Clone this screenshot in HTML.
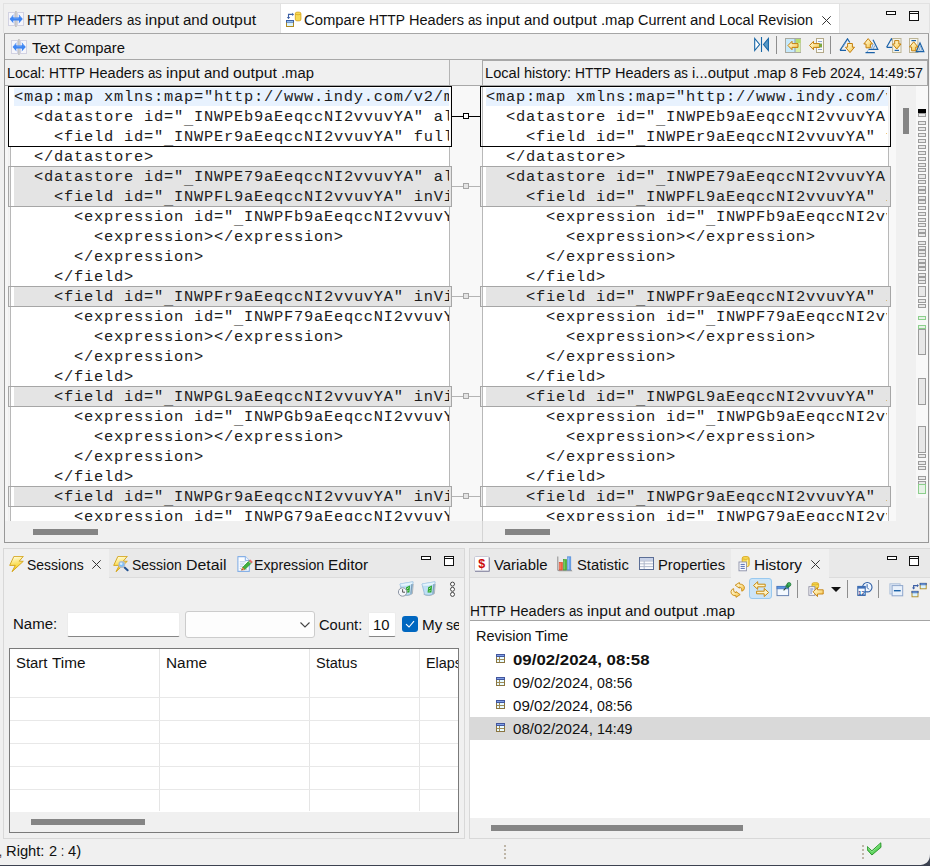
<!DOCTYPE html>
<html><head><meta charset="utf-8"><title>Compare</title>
<style>
html,body{margin:0;padding:0;}
body{width:930px;height:866px;overflow:hidden;background:#f0f0f0;position:relative;font-family:"Liberation Sans",sans-serif;color:#111;}
.a{position:absolute;box-sizing:border-box;}
.t{white-space:pre;}
.w{position:absolute;top:0;transform-origin:0 0;}
.code{position:absolute;overflow:hidden;font-family:"Liberation Mono",monospace;font-size:15.4px;letter-spacing:0.76px;line-height:20px;white-space:pre;color:#1c1c1c;}
.code div{height:20px;}
.code i{font-style:normal;position:relative;top:2.6px;}
</style></head><body>
<svg width="0" height="0" style="position:absolute"><defs><linearGradient id="ga" x1="0" y1="0" x2="0.9" y2="1"><stop offset="0" stop-color="#fffbe8"/><stop offset="0.45" stop-color="#fde9a6"/><stop offset="1" stop-color="#f5c043"/></linearGradient><linearGradient id="gb" x1="0.3" y1="0" x2="0.5" y2="1"><stop offset="0" stop-color="#fffde0"/><stop offset="0.5" stop-color="#fbe060"/><stop offset="1" stop-color="#f8c400"/></linearGradient></defs></svg>
<div class="a" style="left:3px;top:3px;width:927px;height:1px;background:#e2e2e2;"></div>
<div class="a" style="left:3px;top:3px;width:1px;height:30px;background:#e2e2e2;"></div>
<div class="a" style="left:4px;top:33px;width:1px;height:510px;background:#989898;"></div>
<div class="a" style="left:928px;top:33px;width:1px;height:510px;background:#989898;"></div>
<div class="a" style="left:929px;top:3px;width:1px;height:30px;background:#e2e2e2;"></div>
<div class="a" style="left:4px;top:542px;width:925px;height:1px;background:#989898;"></div>
<div class="a" style="left:281px;top:4px;width:559px;height:29px;background:#ffffff;"></div>
<div class="a" style="left:4px;top:33px;width:925px;height:1px;background:#a6a6a6;"></div>
<div class="a" style="left:280px;top:4px;width:1px;height:29px;background:#e2e2e2;"></div>
<div class="a" style="left:839px;top:4px;width:1px;height:29px;background:#e2e2e2;"></div>
<div class="a t" style="left:27.20px;top:9.70px;font-size:15.3px;line-height:20px;"><span class="w" style="left:0.00px;transform:scaleX(0.9052);">HTTP</span> <span class="w" style="left:40.18px;transform:scaleX(0.9553);">Headers</span> <span class="w" style="left:99.43px;transform:scaleX(0.8702);">as</span> <span class="w" style="left:117.51px;transform:scaleX(1.0294);">input</span> <span class="w" style="left:155.68px;transform:scaleX(0.9837);">and</span> <span class="w" style="left:184.81px;transform:scaleX(1.0390);">output</span></div>
<div class="a t" style="left:304.20px;top:9.70px;font-size:15.3px;line-height:20px;"><span class="w" style="left:0.00px;transform:scaleX(0.9685);">Compare</span> <span class="w" style="left:64.94px;transform:scaleX(0.9004);">HTTP</span> <span class="w" style="left:104.90px;transform:scaleX(0.9502);">Headers</span> <span class="w" style="left:163.84px;transform:scaleX(0.8656);">as</span> <span class="w" style="left:181.82px;transform:scaleX(1.0239);">input</span> <span class="w" style="left:219.78px;transform:scaleX(0.9785);">and</span> <span class="w" style="left:248.76px;transform:scaleX(1.0335);">output</span> <span class="w" style="left:296.71px;transform:scaleX(0.9693);">.map</span> <span class="w" style="left:333.67px;transform:scaleX(0.9400);">Current</span> <span class="w" style="left:385.62px;transform:scaleX(0.9785);">and</span> <span class="w" style="left:414.59px;transform:scaleX(0.9560);">Local</span> <span class="w" style="left:453.55px;transform:scaleX(0.9365);">Revision</span></div>
<svg class="a" style="left:822px;top:16px;" width="9" height="9" viewBox="0 0 9 9"><path d="M0.3 0.3 L8.7 8.7 M8.7 0.3 L0.3 8.7" stroke="#333" stroke-width="1" fill="none"/></svg>
<div class="a" style="left:886px;top:11px;width:10px;height:4px;background:#ffffff;border:1px solid #111;"></div>
<div class="a" style="left:909px;top:11px;width:10px;height:10px;background:#ffffff;border:1px solid #111;"></div>
<div class="a" style="left:909px;top:13px;width:10px;height:1px;background:#111;"></div>
<div class="a t" style="left:31.70px;top:37.70px;font-size:15.3px;line-height:20px;"><span class="w" style="left:0.00px;transform:scaleX(0.9979);">Text</span> <span class="w" style="left:32.00px;transform:scaleX(0.9695);">Compare</span></div>
<div class="a" style="left:5px;top:59px;width:923px;height:1px;background:#a8a8a8;"></div>
<div class="a t" style="left:7.20px;top:63.40px;font-size:15.3px;line-height:20px;"><span class="w" style="left:0.00px;transform:scaleX(0.9293);">Local:</span> <span class="w" style="left:41.93px;transform:scaleX(0.8998);">HTTP</span> <span class="w" style="left:81.87px;transform:scaleX(0.9496);">Headers</span> <span class="w" style="left:140.77px;transform:scaleX(0.8650);">as</span> <span class="w" style="left:158.74px;transform:scaleX(1.0232);">input</span> <span class="w" style="left:196.68px;transform:scaleX(0.9778);">and</span> <span class="w" style="left:225.63px;transform:scaleX(1.0328);">output</span> <span class="w" style="left:273.55px;transform:scaleX(0.9687);">.map</span></div>
<div class="a" style="left:449px;top:60px;width:1px;height:26px;background:#b4b4b4;"></div>
<div class="a" style="left:482px;top:60px;width:1px;height:482px;background:#b4b4b4;"></div>
<div class="a" style="left:482px;top:60px;width:446px;height:26px;border:1px solid #a8a8a8;"></div>
<div class="a t" style="left:485.20px;top:63.40px;font-size:15.3px;line-height:20px;"><span class="w" style="left:0.00px;transform:scaleX(0.9570);">Local</span> <span class="w" style="left:39.00px;transform:scaleX(0.9531);">history:</span> <span class="w" style="left:90.00px;transform:scaleX(0.9012);">HTTP</span> <span class="w" style="left:130.00px;transform:scaleX(0.9511);">Headers</span> <span class="w" style="left:189.00px;transform:scaleX(0.8664);">as</span> <span class="w" style="left:207.00px;transform:scaleX(0.9713);">i...output</span> <span class="w" style="left:268.00px;transform:scaleX(0.9703);">.map</span> <span class="w" style="left:305.00px;transform:scaleX(0.9403);">8</span> <span class="w" style="left:317.00px;transform:scaleX(0.9104);">Feb</span> <span class="w" style="left:345.00px;transform:scaleX(0.9142);">2024,</span> <span class="w" style="left:384.00px;transform:scaleX(0.9068);">14:49:57</span></div>
<div class="a" style="left:5px;top:85px;width:923px;height:1px;background:#a8a8a8;"></div>
<div class="a" style="left:9px;top:86px;width:442px;height:435px;background:#ffffff;"></div>
<div class="a" style="left:10px;top:147px;width:1px;height:374px;background:#b8b8b8;"></div>
<div class="a" style="left:449px;top:147px;width:1px;height:374px;background:#b8b8b8;"></div>
<div class="a" style="left:450px;top:86px;width:32px;height:435px;background:#f8f8f8;"></div>
<div class="a" style="left:452px;top:86px;width:28px;height:435px;background:#f8f8f8;"></div>
<div class="a" style="left:483px;top:86px;width:405px;height:435px;background:#ffffff;"></div>
<div class="a" style="left:482px;top:86px;width:1px;height:435px;background:#b8b8b8;"></div>
<div class="a" style="left:888px;top:147px;width:1px;height:374px;background:#b8b8b8;"></div>
<div class="a" style="left:889px;top:86px;width:7px;height:435px;background:#f8f8f8;"></div>
<div class="a" style="left:9px;top:147px;width:1px;height:374px;background:#f4f4f4;"></div>
<div class="a" style="left:5px;top:86px;width:3px;height:435px;background:#f6f6f6;"></div>
<div class="a" style="left:14px;top:88px;width:435px;height:18px;background:#e8f2fe;"></div>
<div class="a" style="left:486px;top:88px;width:402px;height:18px;background:#e8f2fe;"></div>
<div class="a" style="left:14px;top:167px;width:437px;height:40px;background:#e4e4e4;"></div>
<div class="a" style="left:486px;top:167px;width:404px;height:40px;background:#e4e4e4;"></div>
<div class="a" style="left:14px;top:287px;width:437px;height:20px;background:#e4e4e4;"></div>
<div class="a" style="left:486px;top:287px;width:404px;height:20px;background:#e4e4e4;"></div>
<div class="a" style="left:14px;top:387px;width:437px;height:20px;background:#e4e4e4;"></div>
<div class="a" style="left:486px;top:387px;width:404px;height:20px;background:#e4e4e4;"></div>
<div class="a" style="left:14px;top:487px;width:437px;height:20px;background:#e4e4e4;"></div>
<div class="a" style="left:486px;top:487px;width:404px;height:20px;background:#e4e4e4;"></div>
<div class="code" style="left:14px;top:87px;width:435px;height:434px;"><div>&lt;map:map xmlns:map=&quot;http://www.indy.com/v2/map&quot; version=&quot;2.0&quot;&gt;</div><div>  &lt;datastore id=&quot;<i>_</i>INWPEb9aEeqccNI2vvuvYA&quot; alias=&quot;input&quot;&gt;</div><div>    &lt;field id=&quot;<i>_</i>INWPEr9aEeqccNI2vvuvYA&quot; fullName=&quot;headers&quot;/&gt;</div><div>  &lt;/datastore&gt;</div><div>  &lt;datastore id=&quot;<i>_</i>INWPE79aEeqccNI2vvuvYA&quot; alias=&quot;output&quot;&gt;</div><div>    &lt;field id=&quot;<i>_</i>INWPFL9aEeqccNI2vvuvYA&quot; inView=&quot;true&quot;&gt;</div><div>      &lt;expression id=&quot;<i>_</i>INWPFb9aEeqccNI2vvuvYA&quot;&gt;</div><div>        &lt;expression&gt;&lt;/expression&gt;</div><div>      &lt;/expression&gt;</div><div>    &lt;/field&gt;</div><div>    &lt;field id=&quot;<i>_</i>INWPFr9aEeqccNI2vvuvYA&quot; inView=&quot;true&quot;&gt;</div><div>      &lt;expression id=&quot;<i>_</i>INWPF79aEeqccNI2vvuvYA&quot;&gt;</div><div>        &lt;expression&gt;&lt;/expression&gt;</div><div>      &lt;/expression&gt;</div><div>    &lt;/field&gt;</div><div>    &lt;field id=&quot;<i>_</i>INWPGL9aEeqccNI2vvuvYA&quot; inView=&quot;true&quot;&gt;</div><div>      &lt;expression id=&quot;<i>_</i>INWPGb9aEeqccNI2vvuvYA&quot;&gt;</div><div>        &lt;expression&gt;&lt;/expression&gt;</div><div>      &lt;/expression&gt;</div><div>    &lt;/field&gt;</div><div>    &lt;field id=&quot;<i>_</i>INWPGr9aEeqccNI2vvuvYA&quot; inView=&quot;true&quot;&gt;</div><div>      &lt;expression id=&quot;<i>_</i>INWPG79aEeqccNI2vvuvYA&quot;&gt;</div></div>
<div class="code" style="left:486px;top:87px;width:401px;height:434px;"><div>&lt;map:map xmlns:map=&quot;http://www.indy.com/v2/map&quot; version=&quot;2.0&quot;&gt;</div><div>  &lt;datastore id=&quot;<i>_</i>INWPEb9aEeqccNI2vvuvYA&quot; alias=&quot;input&quot;&gt;</div><div>    &lt;field id=&quot;<i>_</i>INWPEr9aEeqccNI2vvuvYA&quot; fullName=&quot;headers&quot;/&gt;</div><div>  &lt;/datastore&gt;</div><div>  &lt;datastore id=&quot;<i>_</i>INWPE79aEeqccNI2vvuvYA&quot; alias=&quot;output&quot;&gt;</div><div>    &lt;field id=&quot;<i>_</i>INWPFL9aEeqccNI2vvuvYA&quot; inView=&quot;true&quot;&gt;</div><div>      &lt;expression id=&quot;<i>_</i>INWPFb9aEeqccNI2vvuvYA&quot;&gt;</div><div>        &lt;expression&gt;&lt;/expression&gt;</div><div>      &lt;/expression&gt;</div><div>    &lt;/field&gt;</div><div>    &lt;field id=&quot;<i>_</i>INWPFr9aEeqccNI2vvuvYA&quot; inView=&quot;true&quot;&gt;</div><div>      &lt;expression id=&quot;<i>_</i>INWPF79aEeqccNI2vvuvYA&quot;&gt;</div><div>        &lt;expression&gt;&lt;/expression&gt;</div><div>      &lt;/expression&gt;</div><div>    &lt;/field&gt;</div><div>    &lt;field id=&quot;<i>_</i>INWPGL9aEeqccNI2vvuvYA&quot; inView=&quot;true&quot;&gt;</div><div>      &lt;expression id=&quot;<i>_</i>INWPGb9aEeqccNI2vvuvYA&quot;&gt;</div><div>        &lt;expression&gt;&lt;/expression&gt;</div><div>      &lt;/expression&gt;</div><div>    &lt;/field&gt;</div><div>    &lt;field id=&quot;<i>_</i>INWPGr9aEeqccNI2vvuvYA&quot; inView=&quot;true&quot;&gt;</div><div>      &lt;expression id=&quot;<i>_</i>INWPG79aEeqccNI2vvuvYA&quot;&gt;</div></div>
<div class="a" style="left:8px;top:166px;width:444px;height:1px;background:#a6a6a6;"></div>
<div class="a" style="left:8px;top:206px;width:444px;height:1px;background:#a6a6a6;"></div>
<div class="a" style="left:8px;top:166px;width:1px;height:41px;background:#a6a6a6;"></div>
<div class="a" style="left:451px;top:166px;width:1px;height:41px;background:#a6a6a6;"></div>
<div class="a" style="left:9px;top:167px;width:1px;height:39px;background:#ececec;"></div>
<div class="a" style="left:480px;top:166px;width:411px;height:1px;background:#a6a6a6;"></div>
<div class="a" style="left:480px;top:206px;width:411px;height:1px;background:#a6a6a6;"></div>
<div class="a" style="left:890px;top:166px;width:1px;height:41px;background:#a6a6a6;"></div>
<div class="a" style="left:480px;top:166px;width:1px;height:41px;background:#a6a6a6;"></div>
<div class="a" style="left:481px;top:167px;width:1px;height:39px;background:#ececec;"></div>
<div class="a" style="left:452px;top:186px;width:28px;height:1px;background:#b4b4b4;"></div>
<div class="a" style="left:463px;top:183px;width:6px;height:6px;background:#e4e4e4;border:1px solid #a6a6a6;"></div>
<div class="a" style="left:8px;top:286px;width:444px;height:1px;background:#a6a6a6;"></div>
<div class="a" style="left:8px;top:306px;width:444px;height:1px;background:#a6a6a6;"></div>
<div class="a" style="left:8px;top:286px;width:1px;height:21px;background:#a6a6a6;"></div>
<div class="a" style="left:451px;top:286px;width:1px;height:21px;background:#a6a6a6;"></div>
<div class="a" style="left:9px;top:287px;width:1px;height:19px;background:#ececec;"></div>
<div class="a" style="left:480px;top:286px;width:411px;height:1px;background:#a6a6a6;"></div>
<div class="a" style="left:480px;top:306px;width:411px;height:1px;background:#a6a6a6;"></div>
<div class="a" style="left:890px;top:286px;width:1px;height:21px;background:#a6a6a6;"></div>
<div class="a" style="left:480px;top:286px;width:1px;height:21px;background:#a6a6a6;"></div>
<div class="a" style="left:481px;top:287px;width:1px;height:19px;background:#ececec;"></div>
<div class="a" style="left:452px;top:296px;width:28px;height:1px;background:#b4b4b4;"></div>
<div class="a" style="left:463px;top:293px;width:6px;height:6px;background:#e4e4e4;border:1px solid #a6a6a6;"></div>
<div class="a" style="left:8px;top:386px;width:444px;height:1px;background:#a6a6a6;"></div>
<div class="a" style="left:8px;top:406px;width:444px;height:1px;background:#a6a6a6;"></div>
<div class="a" style="left:8px;top:386px;width:1px;height:21px;background:#a6a6a6;"></div>
<div class="a" style="left:451px;top:386px;width:1px;height:21px;background:#a6a6a6;"></div>
<div class="a" style="left:9px;top:387px;width:1px;height:19px;background:#ececec;"></div>
<div class="a" style="left:480px;top:386px;width:411px;height:1px;background:#a6a6a6;"></div>
<div class="a" style="left:480px;top:406px;width:411px;height:1px;background:#a6a6a6;"></div>
<div class="a" style="left:890px;top:386px;width:1px;height:21px;background:#a6a6a6;"></div>
<div class="a" style="left:480px;top:386px;width:1px;height:21px;background:#a6a6a6;"></div>
<div class="a" style="left:481px;top:387px;width:1px;height:19px;background:#ececec;"></div>
<div class="a" style="left:452px;top:396px;width:28px;height:1px;background:#b4b4b4;"></div>
<div class="a" style="left:463px;top:393px;width:6px;height:6px;background:#e4e4e4;border:1px solid #a6a6a6;"></div>
<div class="a" style="left:8px;top:486px;width:444px;height:1px;background:#a6a6a6;"></div>
<div class="a" style="left:8px;top:506px;width:444px;height:1px;background:#a6a6a6;"></div>
<div class="a" style="left:8px;top:486px;width:1px;height:21px;background:#a6a6a6;"></div>
<div class="a" style="left:451px;top:486px;width:1px;height:21px;background:#a6a6a6;"></div>
<div class="a" style="left:9px;top:487px;width:1px;height:19px;background:#ececec;"></div>
<div class="a" style="left:480px;top:486px;width:411px;height:1px;background:#a6a6a6;"></div>
<div class="a" style="left:480px;top:506px;width:411px;height:1px;background:#a6a6a6;"></div>
<div class="a" style="left:890px;top:486px;width:1px;height:21px;background:#a6a6a6;"></div>
<div class="a" style="left:480px;top:486px;width:1px;height:21px;background:#a6a6a6;"></div>
<div class="a" style="left:481px;top:487px;width:1px;height:19px;background:#ececec;"></div>
<div class="a" style="left:452px;top:496px;width:28px;height:1px;background:#b4b4b4;"></div>
<div class="a" style="left:463px;top:493px;width:6px;height:6px;background:#e4e4e4;border:1px solid #a6a6a6;"></div>
<div class="a" style="left:8px;top:86px;width:444px;height:1px;background:#000000;"></div>
<div class="a" style="left:8px;top:86px;width:1px;height:61px;background:#000000;"></div>
<div class="a" style="left:8px;top:146px;width:444px;height:1px;background:#000000;"></div>
<div class="a" style="left:451px;top:86px;width:1px;height:61px;background:#000000;"></div>
<div class="a" style="left:480px;top:86px;width:411px;height:1px;background:#000000;"></div>
<div class="a" style="left:480px;top:146px;width:411px;height:1px;background:#000000;"></div>
<div class="a" style="left:480px;top:86px;width:1px;height:61px;background:#000000;"></div>
<div class="a" style="left:890px;top:86px;width:1px;height:61px;background:#000000;"></div>
<div class="a" style="left:452px;top:116px;width:28px;height:1px;background:#000000;"></div>
<div class="a" style="left:463px;top:113px;width:6px;height:6px;background:#ffffff;border:1px solid #000;"></div>
<div class="a" style="left:5px;top:521px;width:923px;height:21px;background:#f0f0f0;"></div>
<div class="a" style="left:482px;top:521px;width:1px;height:21px;background:#d4d4d4;"></div>
<div class="a" style="left:33px;top:529px;width:65px;height:6px;background:#858585;"></div>
<div class="a" style="left:505px;top:529px;width:45px;height:6px;background:#858585;"></div>
<div class="a" style="left:903px;top:108px;width:6px;height:26px;background:#858585;"></div>
<div class="a" style="left:916px;top:86px;width:12px;height:412px;background:#f8f8f8;"></div>
<div class="a" style="left:918px;top:109px;width:8px;height:4px;background:#000;"></div>
<div class="a" style="left:918px;top:113px;width:8px;height:4px;background:#e8e8e8;border:1px solid #9c9c9c;"></div>
<div class="a" style="left:918px;top:121px;width:8px;height:4px;background:#e8e8e8;border:1px solid #9c9c9c;"></div>
<div class="a" style="left:918px;top:127px;width:8px;height:4px;background:#e8e8e8;border:1px solid #9c9c9c;"></div>
<div class="a" style="left:918px;top:133px;width:8px;height:4px;background:#e8e8e8;border:1px solid #9c9c9c;"></div>
<div class="a" style="left:918px;top:139px;width:8px;height:4px;background:#e8e8e8;border:1px solid #9c9c9c;"></div>
<div class="a" style="left:918px;top:145px;width:8px;height:4px;background:#e8e8e8;border:1px solid #9c9c9c;"></div>
<div class="a" style="left:918px;top:151px;width:8px;height:4px;background:#e8e8e8;border:1px solid #9c9c9c;"></div>
<div class="a" style="left:918px;top:157px;width:8px;height:4px;background:#e8e8e8;border:1px solid #9c9c9c;"></div>
<div class="a" style="left:918px;top:163px;width:8px;height:4px;background:#e8e8e8;border:1px solid #9c9c9c;"></div>
<div class="a" style="left:918px;top:168px;width:8px;height:4px;background:#e8e8e8;border:1px solid #9c9c9c;"></div>
<div class="a" style="left:918px;top:174px;width:8px;height:5px;background:#e8e8e8;border:1px solid #9c9c9c;"></div>
<div class="a" style="left:918px;top:180px;width:8px;height:4px;background:#e8e8e8;border:1px solid #9c9c9c;"></div>
<div class="a" style="left:918px;top:186px;width:8px;height:8px;background:#e8e8e8;border:1px solid #9c9c9c;"></div>
<div class="a" style="left:918px;top:189px;width:8px;height:1px;background:#9c9c9c;"></div>
<div class="a" style="left:918px;top:190px;width:8px;height:1px;background:#9c9c9c;"></div>
<div class="a" style="left:918px;top:196px;width:8px;height:8px;background:#e8e8e8;border:1px solid #9c9c9c;"></div>
<div class="a" style="left:918px;top:199px;width:8px;height:1px;background:#9c9c9c;"></div>
<div class="a" style="left:918px;top:200px;width:8px;height:1px;background:#9c9c9c;"></div>
<div class="a" style="left:918px;top:206px;width:8px;height:4px;background:#e8e8e8;border:1px solid #9c9c9c;"></div>
<div class="a" style="left:918px;top:212px;width:8px;height:4px;background:#e8e8e8;border:1px solid #9c9c9c;"></div>
<div class="a" style="left:918px;top:218px;width:8px;height:4px;background:#e8e8e8;border:1px solid #9c9c9c;"></div>
<div class="a" style="left:918px;top:223px;width:8px;height:4px;background:#e8e8e8;border:1px solid #9c9c9c;"></div>
<div class="a" style="left:918px;top:229px;width:8px;height:8px;background:#e8e8e8;border:1px solid #9c9c9c;"></div>
<div class="a" style="left:918px;top:232px;width:8px;height:1px;background:#9c9c9c;"></div>
<div class="a" style="left:918px;top:233px;width:8px;height:1px;background:#9c9c9c;"></div>
<div class="a" style="left:918px;top:241px;width:8px;height:4px;background:#e8e8e8;border:1px solid #9c9c9c;"></div>
<div class="a" style="left:918px;top:246px;width:8px;height:11px;background:#e8e8e8;border:1px solid #9c9c9c;"></div>
<div class="a" style="left:918px;top:249px;width:8px;height:1px;background:#9c9c9c;"></div>
<div class="a" style="left:918px;top:250px;width:8px;height:1px;background:#9c9c9c;"></div>
<div class="a" style="left:918px;top:253px;width:8px;height:1px;background:#9c9c9c;"></div>
<div class="a" style="left:918px;top:259px;width:8px;height:12px;background:#e8e8e8;border:1px solid #9c9c9c;"></div>
<div class="a" style="left:918px;top:262px;width:8px;height:1px;background:#9c9c9c;"></div>
<div class="a" style="left:918px;top:263px;width:8px;height:1px;background:#9c9c9c;"></div>
<div class="a" style="left:918px;top:266px;width:8px;height:1px;background:#9c9c9c;"></div>
<div class="a" style="left:918px;top:267px;width:8px;height:1px;background:#9c9c9c;"></div>
<div class="a" style="left:918px;top:273px;width:8px;height:11px;background:#e8e8e8;border:1px solid #9c9c9c;"></div>
<div class="a" style="left:918px;top:276px;width:8px;height:1px;background:#9c9c9c;"></div>
<div class="a" style="left:918px;top:277px;width:8px;height:1px;background:#9c9c9c;"></div>
<div class="a" style="left:918px;top:280px;width:8px;height:1px;background:#9c9c9c;"></div>
<div class="a" style="left:918px;top:286px;width:8px;height:11px;background:#e8e8e8;border:1px solid #9c9c9c;"></div>
<div class="a" style="left:918px;top:299px;width:8px;height:4px;background:#e8e8e8;border:1px solid #9c9c9c;"></div>
<div class="a" style="left:918px;top:304px;width:8px;height:4px;background:#e8e8e8;border:1px solid #9c9c9c;"></div>
<div class="a" style="left:918px;top:316px;width:8px;height:4px;background:#e6f2e6;border:1px solid #8ccf8c;"></div>
<div class="a" style="left:918px;top:325px;width:8px;height:4px;background:#e6f2e6;border:1px solid #8ccf8c;"></div>
<div class="a" style="left:918px;top:329px;width:8px;height:26px;background:#e8e8e8;border:1px solid #9c9c9c;"></div>
<div class="a" style="left:918px;top:378px;width:8px;height:27px;background:#e8e8e8;border:1px solid #9c9c9c;"></div>
<div class="a" style="left:918px;top:426px;width:8px;height:27px;background:#e8e8e8;border:1px solid #9c9c9c;"></div>
<div class="a" style="left:918px;top:454px;width:8px;height:4px;background:#e8e8e8;border:1px solid #9c9c9c;"></div>
<div class="a" style="left:918px;top:461px;width:8px;height:4px;background:#e8e8e8;border:1px solid #9c9c9c;"></div>
<div class="a" style="left:918px;top:466px;width:8px;height:4px;background:#e8e8e8;border:1px solid #9c9c9c;"></div>
<div class="a" style="left:918px;top:476px;width:8px;height:4px;background:#e8e8e8;border:1px solid #9c9c9c;"></div>
<div class="a" style="left:918px;top:481px;width:8px;height:4px;background:#e8e8e8;border:1px solid #9c9c9c;"></div>
<div class="a" style="left:918px;top:484px;width:8px;height:10px;background:#e6f2e6;border:1px solid #8ccf8c;"></div>
<div class="a" style="left:3px;top:548px;width:462px;height:291px;background:#f0f0f0;border:1px solid #d8d8d8;"></div>
<div class="a" style="left:4px;top:549px;width:460px;height:29px;background:#e9e9e9;"></div>
<div class="a" style="left:4px;top:549px;width:105px;height:29px;background:#f0f0f0;"></div>
<div class="a" style="left:109px;top:577px;width:355px;height:1px;background:#dcdcdc;"></div>
<div class="a t" style="left:26.70px;top:554.70px;font-size:15.3px;line-height:20px;"><span class="w" style="left:0.00px;transform:scaleX(0.9125);">Sessions</span></div>
<svg class="a" style="left:92px;top:560px;" width="9" height="9" viewBox="0 0 9 9"><path d="M0.3 0.3 L8.7 8.7 M8.7 0.3 L0.3 8.7" stroke="#333" stroke-width="1" fill="none"/></svg>
<div class="a t" style="left:131.70px;top:554.70px;font-size:15.3px;line-height:20px;"><span class="w" style="left:0.00px;transform:scaleX(0.9148);">Session</span> <span class="w" style="left:53.85px;transform:scaleX(1.0391);">Detail</span></div>
<div class="a t" style="left:254.20px;top:554.70px;font-size:15.3px;line-height:20px;"><span class="w" style="left:0.00px;transform:scaleX(0.9282);">Expression</span> <span class="w" style="left:74.26px;transform:scaleX(1.0044);">Editor</span></div>
<div class="a" style="left:421px;top:556px;width:10px;height:4px;background:#ffffff;border:1px solid #111;"></div>
<div class="a" style="left:444px;top:556px;width:10px;height:10px;background:#ffffff;border:1px solid #111;"></div>
<div class="a" style="left:444px;top:558px;width:10px;height:1px;background:#111;"></div>
<svg class="a" style="left:448px;top:581px;" width="10" height="17" viewBox="0 0 10 17"><circle cx="4.5" cy="3.1" r="2" fill="#fff" stroke="#444" stroke-width="1"/><circle cx="4.5" cy="8.3" r="2" fill="#fff" stroke="#444" stroke-width="1"/><circle cx="4.5" cy="13.4" r="2" fill="#fff" stroke="#444" stroke-width="1"/></svg>
<div class="a t" style="left:13.20px;top:614.30px;font-size:15.3px;line-height:20px;"><span class="w" style="left:0.00px;transform:scaleX(0.9829);">Name:</span></div>
<div class="a" style="left:67px;top:612px;width:113px;height:25px;background:#ffffff;border:1px solid #ececec;border-bottom-color:#868686;border-radius:2px;"></div>
<div class="a" style="left:185px;top:610.5px;width:130px;height:27px;background:#fdfdfd;border:1px solid #cccccc;border-radius:3px;"></div>
<svg class="a" style="left:299.5px;top:621.5px;" width="10" height="6" viewBox="0 0 10 6"><path d="M0.5 0.5 L5 5 L9.5 0.5" stroke="#444" stroke-width="1.1" fill="none"/></svg>
<div class="a t" style="left:319.20px;top:614.90px;font-size:15.3px;line-height:20px;"><span class="w" style="left:0.00px;transform:scaleX(0.9597);">Count:</span></div>
<div class="a" style="left:367.5px;top:612px;width:28.5px;height:25px;background:#ffffff;border:1px solid #ececec;border-bottom-color:#868686;border-radius:2px;"></div>
<div class="a t" style="left:373.20px;top:614.90px;font-size:15.3px;line-height:20px;"><span class="w" style="left:0.00px;transform:scaleX(0.9685);">10</span></div>
<div class="a" style="left:402px;top:616px;width:16px;height:16px;background:#0067c0;border-radius:3px;"></div>
<svg class="a" style="left:402px;top:616px;" width="16" height="16" viewBox="0 0 16 16"><path d="M4 8.2 L7 11 L12 5.2" stroke="#fff" stroke-width="1.1" fill="none"/></svg>
<div class="a" style="left:422px;top:610px;width:37px;height:30px;overflow:hidden;">
<div class="a t" style="left:-0.30px;top:4.70px;font-size:15.3px;line-height:20px;"><span class="w" style="left:0.00px;transform:scaleX(0.9945);">My</span> <span class="w" style="left:24.34px;transform:scaleX(0.9188);">session</span></div>
</div>
<div class="a" style="left:9px;top:648px;width:450px;height:185px;background:#ffffff;border:1px solid #7a7a7a;"></div>
<div class="a" style="left:10px;top:812px;width:448px;height:20px;background:#f0f0f0;"></div>
<div class="a" style="left:31px;top:819px;width:114px;height:6px;background:#858585;"></div>
<div class="a" style="left:159px;top:649px;width:1px;height:162px;background:#e5e5e5;"></div>
<div class="a" style="left:309px;top:649px;width:1px;height:162px;background:#e5e5e5;"></div>
<div class="a" style="left:419px;top:649px;width:1px;height:162px;background:#e5e5e5;"></div>
<div class="a" style="left:10px;top:697px;width:448px;height:1px;background:#e8e8e8;"></div>
<div class="a" style="left:10px;top:720px;width:448px;height:1px;background:#e8e8e8;"></div>
<div class="a" style="left:10px;top:743px;width:448px;height:1px;background:#e8e8e8;"></div>
<div class="a" style="left:10px;top:766px;width:448px;height:1px;background:#e8e8e8;"></div>
<div class="a" style="left:10px;top:789px;width:448px;height:1px;background:#e8e8e8;"></div>
<div class="a t" style="left:16.00px;top:652.70px;font-size:15.3px;line-height:20px;"><span class="w" style="left:0.00px;transform:scaleX(0.9736);">Start</span> <span class="w" style="left:35.51px;transform:scaleX(1.0016);">Time</span></div>
<div class="a t" style="left:166.00px;top:652.70px;font-size:15.3px;line-height:20px;"><span class="w" style="left:0.00px;transform:scaleX(1.0046);">Name</span></div>
<div class="a t" style="left:316.00px;top:652.70px;font-size:15.3px;line-height:20px;"><span class="w" style="left:0.00px;transform:scaleX(0.9499);">Status</span></div>
<div class="a" style="left:420px;top:650px;width:38px;height:30px;overflow:hidden;">
<div class="a t" style="left:6.40px;top:2.70px;font-size:15.3px;line-height:20px;"><span class="w" style="left:0.00px;transform:scaleX(0.9405);">Elapsed</span></div>
</div>
<div class="a" style="left:469px;top:548px;width:465px;height:291px;background:#f0f0f0;border:1px solid #d8d8d8;"></div>
<div class="a" style="left:470px;top:549px;width:460px;height:29px;background:#e9e9e9;"></div>
<div class="a" style="left:731px;top:549px;width:98px;height:29px;background:#f0f0f0;"></div>
<div class="a" style="left:470px;top:577px;width:261px;height:1px;background:#dcdcdc;"></div>
<div class="a" style="left:829px;top:577px;width:101px;height:1px;background:#dcdcdc;"></div>
<div class="a t" style="left:493.50px;top:554.70px;font-size:15.3px;line-height:20px;"><span class="w" style="left:0.00px;transform:scaleX(0.9728);">Variable</span></div>
<div class="a t" style="left:576.50px;top:554.70px;font-size:15.3px;line-height:20px;"><span class="w" style="left:0.00px;transform:scaleX(0.9671);">Statistic</span></div>
<div class="a t" style="left:658.00px;top:554.70px;font-size:15.3px;line-height:20px;"><span class="w" style="left:0.00px;transform:scaleX(0.9638);">Properties</span></div>
<div class="a t" style="left:754.20px;top:554.70px;font-size:15.3px;line-height:20px;"><span class="w" style="left:0.00px;transform:scaleX(1.0084);">History</span></div>
<svg class="a" style="left:811px;top:560px;" width="9" height="9" viewBox="0 0 9 9"><path d="M0.3 0.3 L8.7 8.7 M8.7 0.3 L0.3 8.7" stroke="#333" stroke-width="1" fill="none"/></svg>
<div class="a" style="left:887px;top:556px;width:10px;height:4px;background:#ffffff;border:1px solid #111;"></div>
<div class="a" style="left:909px;top:556px;width:10px;height:10px;background:#ffffff;border:1px solid #111;"></div>
<div class="a" style="left:909px;top:558px;width:10px;height:1px;background:#111;"></div>
<div class="a t" style="left:470.20px;top:600.70px;font-size:15.3px;line-height:20px;"><span class="w" style="left:0.00px;transform:scaleX(0.8995);">HTTP</span> <span class="w" style="left:39.92px;transform:scaleX(0.9493);">Headers</span> <span class="w" style="left:98.81px;transform:scaleX(0.8648);">as</span> <span class="w" style="left:116.78px;transform:scaleX(1.0229);">input</span> <span class="w" style="left:154.71px;transform:scaleX(0.9776);">and</span> <span class="w" style="left:183.65px;transform:scaleX(1.0325);">output</span> <span class="w" style="left:231.56px;transform:scaleX(0.9684);">.map</span></div>
<div class="a" style="left:470px;top:620px;width:460px;height:1px;background:#a4a4a4;"></div>
<div class="a" style="left:470px;top:621px;width:460px;height:217px;background:#ffffff;"></div>
<div class="a" style="left:470px;top:818px;width:460px;height:20px;background:#f0f0f0;"></div>
<div class="a" style="left:491px;top:825px;width:252px;height:6px;background:#858585;"></div>
<div class="a t" style="left:475.80px;top:626.10px;font-size:15.3px;line-height:20px;"><span class="w" style="left:0.00px;transform:scaleX(0.9476);">Revision</span> <span class="w" style="left:59.64px;transform:scaleX(0.9979);">Time</span></div>
<div class="a" style="left:470px;top:717px;width:460px;height:23px;background:#d9d9d9;"></div>
<div class="a t" style="left:513.2px;top:649.70px;font-size:15.3px;line-height:20px;font-weight:bold;transform:scaleX(1.0999);transform-origin:0 0;">09/02/2024, 08:58</div>
<div class="a t" style="left:513.20px;top:672.70px;font-size:15.3px;line-height:20px;"><span class="w" style="left:0.00px;transform:scaleX(0.9899);">09/02/2024,</span> <span class="w" style="left:84.06px;transform:scaleX(0.9259);">08:56</span></div>
<div class="a t" style="left:513.20px;top:695.70px;font-size:15.3px;line-height:20px;"><span class="w" style="left:0.00px;transform:scaleX(0.9899);">09/02/2024,</span> <span class="w" style="left:84.06px;transform:scaleX(0.9259);">08:56</span></div>
<div class="a t" style="left:513.20px;top:718.70px;font-size:15.3px;line-height:20px;"><span class="w" style="left:0.00px;transform:scaleX(0.9899);">08/02/2024,</span> <span class="w" style="left:84.06px;transform:scaleX(0.9259);">14:49</span></div>
<div class="a" style="left:0px;top:839px;width:930px;height:27px;background:#f0f0f0;"></div>
<div class="a t" style="left:-0.80px;top:840.70px;font-size:15.3px;line-height:20px;"><span class="w" style="left:0.00px;transform:scaleX(0.7145);">,</span> <span class="w" style="left:7.09px;transform:scaleX(0.9625);">Right:</span> <span class="w" style="left:49.60px;transform:scaleX(0.9519);">2</span> <span class="w" style="left:61.75px;transform:scaleX(0.7145);">:</span> <span class="w" style="left:68.84px;transform:scaleX(0.9675);">4)</span></div>
<div class="a" style="left:504px;top:845px;width:2px;height:2px;background:#beb6a8;"></div>
<div class="a" style="left:504px;top:849px;width:2px;height:2px;background:#beb6a8;"></div>
<div class="a" style="left:504px;top:853px;width:2px;height:2px;background:#beb6a8;"></div>
<div class="a" style="left:504px;top:857px;width:2px;height:2px;background:#beb6a8;"></div>
<div class="a" style="left:862px;top:845px;width:2px;height:2px;background:#beb6a8;"></div>
<div class="a" style="left:862px;top:849px;width:2px;height:2px;background:#beb6a8;"></div>
<div class="a" style="left:862px;top:853px;width:2px;height:2px;background:#beb6a8;"></div>
<div class="a" style="left:862px;top:857px;width:2px;height:2px;background:#beb6a8;"></div>
<svg class="a" style="left:867px;top:842px;" width="15" height="14" viewBox="0 0 15 14"><path d="M0.2 4.6 L4.9 8.8 L13.8 0.8 L14 5.3 L4.9 13 L0.3 7.9 Z" fill="#62d662" stroke="#1f8f1f" stroke-width="0.9" stroke-linejoin="round"/><path d="M1 6 L4.9 9.8 L13.2 2.4" fill="none" stroke="#a6f0a6" stroke-width="0.9" opacity="0.6"/></svg>
<div class="a" style="left:0px;top:865px;width:930px;height:1px;background:#3c4250;"></div>
<svg class="a" style="left:918px;top:854px;" width="12" height="12" viewBox="0 0 12 12"><path d="M12 0 Q12 11.2 0 11.2 L0 12 L12 12 Z" fill="#3c4250"/></svg>
<svg class="a" style="left:8px;top:11px;" width="16" height="16" viewBox="0 0 16 16"><rect x="0.5" y="1.5" width="6" height="13" fill="#f6f6fb" stroke="#d2d2e2"/><rect x="9.5" y="1.5" width="6" height="13" fill="#f6f6fb" stroke="#d2d2e2"/><rect x="7" y="0" width="1.8" height="16" fill="#c6c6c6"/><path d="M1.6 7.9 L5.5 3.2 Q4.8 5.6 5.6 6.4 L10.6 6.4 Q11.4 5.6 10.7 3.2 L14.8 7.9 L10.7 12.6 Q11.4 10.2 10.6 9.5 L5.6 9.5 Q4.8 10.2 5.5 12.6 Z" fill="#3f86f2"/><path d="M3.2 6.6 L4.6 5 M11.6 5 L13 6.6" fill="none" stroke="#a8caff" stroke-width="0.7" opacity="0.8"/><path d="M5.6 7.3 H10.6" stroke="#7fb0ff" stroke-width="0.7" opacity="0.7"/></svg>
<svg class="a" style="left:11px;top:39px;" width="16" height="16" viewBox="0 0 16 16"><rect x="0.5" y="1.5" width="6" height="13" fill="#f6f6fb" stroke="#d2d2e2"/><rect x="9.5" y="1.5" width="6" height="13" fill="#f6f6fb" stroke="#d2d2e2"/><rect x="7" y="0" width="1.8" height="16" fill="#c6c6c6"/><path d="M1.6 7.9 L5.5 3.2 Q4.8 5.6 5.6 6.4 L10.6 6.4 Q11.4 5.6 10.7 3.2 L14.8 7.9 L10.7 12.6 Q11.4 10.2 10.6 9.5 L5.6 9.5 Q4.8 10.2 5.5 12.6 Z" fill="#3f86f2"/><path d="M3.2 6.6 L4.6 5 M11.6 5 L13 6.6" fill="none" stroke="#a8caff" stroke-width="0.7" opacity="0.8"/><path d="M5.6 7.3 H10.6" stroke="#7fb0ff" stroke-width="0.7" opacity="0.7"/></svg>
<svg class="a" style="left:286px;top:11px;" width="16" height="16" viewBox="0 0 16 16"><rect x="0.5" y="9.5" width="7" height="6" fill="#d9f3ff" stroke="#b08a20"/><rect x="0" y="9" width="8" height="2.6" fill="#3c5fa5"/><rect x="1" y="10" width="6" height="1" fill="#8fc0f0"/><path d="M2.5 7.4 L2.5 3.4 L7 3.4" fill="none" stroke="#3c5fa5" stroke-width="1.1"/><path d="M0.8 6 L2.5 8 L4.2 6 Z M6.2 1.7 L8.1 3.4 L6.2 5.1 Z" fill="#3c5fa5"/><rect x="9.3" y="1.2" width="5.6" height="8.6" rx="1.6" fill="#f6da55" stroke="#d9a61c" stroke-width="0.9"/><path d="M9.4 3.2 Q12 4.4 14.8 3.2" fill="none" stroke="#d9a61c" stroke-width="0.8"/></svg>
<svg class="a" style="left:754px;top:37px;" width="16" height="16" viewBox="0 0 16 16"><path d="M0.7 1.5 L0.7 13.5 L5.6 7.5 Z" fill="#fff" stroke="#1766a6" stroke-width="1.1"/><path d="M7.5 0 L7.5 15" stroke="#1766a6" stroke-width="1.1"/><path d="M14.4 1.5 L14.4 13.5 L9.5 7.5 Z" fill="#5b9bc8" stroke="#1766a6" stroke-width="1.1"/></svg>
<div class="a" style="left:776px;top:36px;width:1px;height:18px;background:#8e8e8e;"></div>
<svg class="a" style="left:785px;top:38px;" width="16" height="16" viewBox="0 0 16 16"><rect x="0.5" y="0.5" width="15" height="14" fill="#c6e9fb" stroke="#a9a9a0"/><rect x="10.5" y="1" width="5" height="13" fill="#d9efa6"/><rect x="10.5" y="1" width="5" height="4" fill="#b5dd6a"/><path d="M10 1 L10 14" stroke="#8b9aa8" stroke-width="1"/><path d="M3 7.5 L7 3.3 L7 5.6 L13 5.6 L13 9.4 L7 9.4 L7 11.7 Z" fill="url(#ga)" stroke="#c47f0c" stroke-width="1" stroke-linejoin="round"/></svg>
<svg class="a" style="left:809px;top:38px;" width="16" height="16" viewBox="0 0 16 16"><rect x="7.5" y="0.5" width="7" height="14" fill="#fbfbf6" stroke="#b3a98a"/><path d="M9 3.5 H13 M9 6 H13 M9 9 H13 M9 11.5 H13" stroke="#8ea6d8" stroke-width="1"/><path d="M0.5 7.5 L4.5 3.3 L4.5 5.6 L10.5 5.6 L10.5 9.4 L4.5 9.4 L4.5 11.7 Z" fill="url(#ga)" stroke="#c47f0c" stroke-width="1" stroke-linejoin="round"/><rect x="10" y="5.8" width="3" height="3.4" fill="#7ea83a"/></svg>
<div class="a" style="left:830px;top:36px;width:1px;height:18px;background:#8e8e8e;"></div>
<svg class="a" style="left:839px;top:37.5px;" width="16" height="16" viewBox="0 0 16 16"><path d="M1 12.3 L8.5 0.8 L10.8 4.5 M1 12.3 L7 12.3" fill="none" stroke="#1b62a8" stroke-width="1.2"/><path d="M6.6 4.6 L4 9" stroke="#6f9fd0" stroke-width="1"/><path d="M8.6 5.5 L13.4 5.5 L13.4 9.2 L15.5 9.2 L11 14.6 L6.5 9.2 L8.6 9.2 Z" fill="url(#ga)" stroke="#c47f0c" stroke-width="1" stroke-linejoin="round"/></svg>
<svg class="a" style="left:863px;top:37.5px;" width="16" height="16" viewBox="0 0 16 16"><path d="M10 1.8 L14.8 11.3 L5.5 11.3 M2.5 14.6 L11.8 14.6" fill="none" stroke="#1b62a8" stroke-width="1.2"/><path d="M10.2 6 L8.4 10.6 M11.8 7.5 L10.2 11 M5 12.5 L4 14" stroke="#6f9fd0" stroke-width="1"/><path d="M3 9.8 L7.4 9.8 L7.4 6 L9.5 6 L5.2 0.6 L0.8 6 L3 6 Z" fill="url(#ga)" stroke="#c47f0c" stroke-width="1" stroke-linejoin="round"/></svg>
<svg class="a" style="left:886px;top:37.5px;" width="16" height="16" viewBox="0 0 16 16"><path d="M0.6 9.3 L5.4 0.8 L7 3.6 M0.6 9.3 L6 9.3" fill="none" stroke="#1b62a8" stroke-width="1.2"/><rect x="6.6" y="0.5" width="8.4" height="14" fill="#f4f4ec" stroke="#bdb596"/><path d="M8.6 12.4 H13" stroke="#1b62a8" stroke-width="1.2"/><path d="M8.7 2.6 L12.9 2.6 L12.9 6 L15 6 L10.8 11 L6.6 6 L8.7 6 Z" fill="url(#ga)" stroke="#c47f0c" stroke-width="1" stroke-linejoin="round"/></svg>
<svg class="a" style="left:909px;top:37.5px;" width="16" height="16" viewBox="0 0 16 16"><rect x="0.5" y="0.5" width="8.4" height="14" fill="#f4f4ec" stroke="#bdb596"/><path d="M2.4 2.6 H7" stroke="#1b62a8" stroke-width="1.2"/><path d="M7.2 13.6 L11 5 L14.8 13.6 Z" fill="none" stroke="#1b62a8" stroke-width="1.2"/><path d="M11.6 8 L10 12.6 M12.8 10 L11.8 13" stroke="#6f9fd0" stroke-width="0.9"/><path d="M2.6 12.8 L6.8 12.8 L6.8 9 L9 9 L4.7 3.8 L0.5 9 L2.6 9 Z" fill="url(#ga)" stroke="#c47f0c" stroke-width="1" stroke-linejoin="round"/></svg>
<svg class="a" style="left:8.5px;top:556px;" width="16" height="16" viewBox="0 0 16 16"><path d="M4.9 0.4 L14.3 0.4 L10.2 5.2 L14.3 5.3 L3 15.7 L6.3 9.4 L0.7 9.4 Z" fill="url(#gb)" stroke="#d2a214" stroke-width="0.9" stroke-linejoin="round"/></svg>
<svg class="a" style="left:113.4px;top:556px;" width="16" height="16" viewBox="0 0 16 16"><path d="M4.9 0.4 L14.3 0.4 L10.2 5.2 L14.3 5.3 L3 15.7 L6.3 9.4 L0.7 9.4 Z" fill="url(#gb)" stroke="#d2a214" stroke-width="0.9" stroke-linejoin="round"/><path d="M11.6 11.6 L14.6 14.3" stroke="#1f5090" stroke-width="2" stroke-linecap="round"/><circle cx="8.8" cy="8.5" r="2.9" fill="#7cc0fa" stroke="#b4bcc6" stroke-width="1.1"/><circle cx="8.2" cy="7.8" r="1.3" fill="#d8eeff"/></svg>
<svg class="a" style="left:236.5px;top:556px;" width="16" height="16" viewBox="0 0 16 16"><path d="M0.9 0.6 H8.3 L12.3 4.6 V15.4 H0.9 Z" fill="#fbfdff" stroke="#86b0e6" stroke-width="1.1" stroke-linejoin="round"/><path d="M8.3 0.6 V4.6 H12.3" fill="#eef5ff" stroke="#86b0e6" stroke-width="1"/><path d="M2.8 5.8 H8.6 M2.8 8 H7.4 M2.8 10.2 H6 M2.8 12.4 H4.4 M8.6 13.4 H10.2" stroke="#a9c3e6" stroke-width="0.9"/><path d="M5.6 11.4 L12.2 4.8 L14.4 7 L7.8 13.6 Z" fill="#3fb13f" stroke="#1f8a2a" stroke-width="0.7"/><path d="M4.4 14.2 L5.6 11.4 L7.8 13.6 Z" fill="#f39a5a" stroke="#c8601c" stroke-width="0.5"/><path d="M4.4 14.2 L5 13 L5.8 13.8 Z" fill="#333"/><path d="M12.2 4.8 L13.2 3.8 L15.4 6 L14.4 7 Z" fill="#f06a6a" stroke="#d84848" stroke-width="0.5"/><path d="M11.7 5.3 L13.9 7.5" stroke="#e8e8e8" stroke-width="0.8"/></svg>
<svg class="a" style="left:398px;top:581px;" width="16" height="16" viewBox="0 0 16 16"><path d="M3.6 13.2 Q9 16.2 14.4 12.6 L15.2 3" fill="none" stroke="#9a9a9a" stroke-width="1" opacity="0.7"/><path d="M2 3 L15 0.8 L13.4 13 Q9 15.2 4.6 13.6 Z" fill="#bfe0f6" stroke="#8fb6d6" stroke-width="0.8"/><path d="M2 3 L15 0.8 L14.5 3.6 Q8 6 2.8 5.2 Z" fill="#e6f5fd" stroke="#a8cdea" stroke-width="0.6"/><path d="M14 3 L12.8 12.8" stroke="#7f9fb8" stroke-width="1.2"/><path d="M8.2 6.2 L12 4.6 L11.4 11.4 L7.6 11.6 Z" fill="#25a225"/><path d="M8.8 8 L10.8 6.6 M8.6 10.2 L10.6 9.6" stroke="#b6ecb6" stroke-width="0.9"/><circle cx="4.6" cy="11" r="4.2" fill="#f4f6fa" stroke="#8e96a4" stroke-width="1"/><path d="M4.6 8.2 V11.2 H7" fill="none" stroke="#444" stroke-width="0.9"/></svg>
<svg class="a" style="left:420px;top:581px;" width="16" height="16" viewBox="0 0 16 16"><path d="M3.6 13.2 Q9 16.2 14.4 12.6 L15.2 3" fill="none" stroke="#9a9a9a" stroke-width="1" opacity="0.7"/><path d="M2 3 L15 0.8 L13.4 13 Q9 15.2 4.6 13.6 Z" fill="#bfe0f6" stroke="#8fb6d6" stroke-width="0.8"/><path d="M2 3 L15 0.8 L14.5 3.6 Q8 6 2.8 5.2 Z" fill="#e6f5fd" stroke="#a8cdea" stroke-width="0.6"/><path d="M14 3 L12.8 12.8" stroke="#7f9fb8" stroke-width="1.2"/><path d="M8.2 6.2 L12 4.6 L11.4 11.4 L7.6 11.6 Z" fill="#25a225"/><path d="M8.8 8 L10.8 6.6 M8.6 10.2 L10.6 9.6" stroke="#b6ecb6" stroke-width="0.9"/></svg>
<svg class="a" style="left:474px;top:556px;" width="16" height="16" viewBox="0 0 16 16"><rect x="0.5" y="0.5" width="14.4" height="14.4" rx="1.2" fill="#fdfdfd" stroke="#c9c9d6"/><path d="M1 15.4 H15.4 V1.4" fill="none" stroke="#8c8ca6" stroke-width="1"/><text x="7.7" y="12.2" text-anchor="middle" font-family="Liberation Sans, sans-serif" font-weight="bold" font-size="12.5" fill="#cc0a0a">$</text></svg>
<svg class="a" style="left:557px;top:556px;" width="16" height="16" viewBox="0 0 16 16"><path d="M0.8 0.5 V14.4 H15" fill="none" stroke="#8e8e8e" stroke-width="1"/><path d="M1.6 15.2 H15.4" stroke="#c4c4c4" stroke-width="0.8"/><rect x="2.2" y="6.4" width="3.2" height="7.6" fill="#f4623e" stroke="#d8452a" stroke-width="0.6"/><rect x="6.4" y="3.6" width="3.2" height="10.4" fill="#52b838" stroke="#3a9a28" stroke-width="0.6"/><rect x="10.6" y="0.8" width="3.2" height="13.2" fill="#6aa6f0" stroke="#4a86d4" stroke-width="0.6"/><path d="M3 7.2 V13.4 M7.2 4.4 V13.4 M11.4 1.6 V13.4" stroke="#ffffff" stroke-width="0.7" opacity="0.45"/></svg>
<svg class="a" style="left:639px;top:556px;" width="16" height="16" viewBox="0 0 16 16"><rect x="0.5" y="1.5" width="14" height="12" fill="#fbfbfd" stroke="#5b6e96"/><rect x="1" y="2" width="13" height="2.6" fill="#c8d2e8"/><path d="M1 5 H14 M1 7.8 H14 M1 10.6 H14" stroke="#aab2c6" stroke-width="0.9"/><path d="M5.2 5 V13" stroke="#aab2c6" stroke-width="0.9"/></svg>
<svg class="a" style="left:737.5px;top:556px;" width="16" height="16" viewBox="0 0 16 16"><rect x="4.2" y="0.6" width="7" height="10" rx="2" fill="#f6da55" stroke="#d9a61c" stroke-width="0.9"/><path d="M4.3 2.8 Q7.7 4 11.1 2.8" fill="none" stroke="#d9a61c" stroke-width="0.7"/><path d="M9.4 3.6 V10" stroke="#fff6c0" stroke-width="1" opacity="0.7"/><rect x="1" y="6" width="7.4" height="8.8" fill="#fdfdff" stroke="#8a90a8" stroke-width="0.9"/><path d="M2.6 8.4 H6.8 M2.6 10.4 H6.8 M2.6 12.4 H6.8" stroke="#3c5aa8" stroke-width="0.9"/></svg>
<svg class="a" style="left:729.5px;top:581.5px;" width="16" height="16" viewBox="0 0 16 16"><path d="M5.2 3.2 L9.4 0.5 L9.4 2 Q14.6 2.2 14.4 6.4 Q14 8.6 11.8 9.2 Q12.6 5.6 9.4 5 L9.4 6.2 Z" fill="url(#ga)" stroke="#c88a10" stroke-width="0.9" stroke-linejoin="round"/><path d="M10.2 12.6 L6 15.3 L6 13.8 Q0.8 13.6 1 9.4 Q1.4 7.2 3.6 6.6 Q2.8 10.2 6 10.8 L6 9.6 Z" fill="url(#ga)" stroke="#c88a10" stroke-width="0.9" stroke-linejoin="round"/></svg>
<div class="a" style="left:749px;top:578px;width:23px;height:21px;background:#cce4f7;border:1px solid #99c9ef;border-radius:3px;"></div>
<svg class="a" style="left:753px;top:581px;" width="16" height="16" viewBox="0 0 16 16"><path d="M0.5 4.5 L4.7 0.7 L4.7 3.2 L12.2 3.2 L12.2 5.8 L4.7 5.8 L4.7 8.3 Z" fill="#fff3c4" stroke="#c88a10" stroke-width="1" stroke-linejoin="round"/><path d="M15.6 11.5 L11.2 7.4 L11.2 10.2 L3.6 10.2 L3.6 12.8 L11.2 12.8 L11.2 15.5 Z" fill="#fff3c4" stroke="#c88a10" stroke-width="1" stroke-linejoin="round"/></svg>
<svg class="a" style="left:776px;top:581px;" width="16" height="16" viewBox="0 0 16 16"><rect x="1" y="5.4" width="11.6" height="9.2" fill="#f4f9ff" stroke="#6a86b4"/><rect x="1" y="5.4" width="11.6" height="2.4" fill="#5a96e0" stroke="#4a78c0" stroke-width="0.8"/><path d="M7.6 9.4 L10.2 6.6" stroke="#2a4a3a" stroke-width="1.1"/><path d="M9.6 5.2 L11.6 2.6 L14 4.6 L11.8 7 Z" fill="#2f9a4a" stroke="#1c6e34" stroke-width="0.7"/><circle cx="13" cy="3.4" r="1.9" fill="#3fb45c" stroke="#1c6e34" stroke-width="0.7"/></svg>
<div class="a" style="left:797px;top:580px;width:1px;height:18px;background:#8e8e8e;"></div>
<svg class="a" style="left:807.5px;top:581.5px;" width="16" height="16" viewBox="0 0 16 16"><rect x="4" y="0.8" width="6.6" height="5.4" rx="1.6" fill="#f6da55" stroke="#d9a61c" stroke-width="0.9"/><path d="M4.1 2.4 Q7.3 3.4 10.5 2.4" fill="none" stroke="#d9a61c" stroke-width="0.7"/><rect x="0.9" y="4.7" width="6" height="8.6" fill="#fdfdff" stroke="#8c8ca0" stroke-width="0.9"/><path d="M2.2 7 H5.4 M2.2 9 H4.6 M2.2 11 H4.2" stroke="#4a6ac0" stroke-width="0.9"/><path d="M5 9.8 L9.5 5.8 L9.5 7.8 L15.2 7.8 L15.2 12 L9.5 12 L9.5 14.6 Z" fill="url(#ga)" stroke="#c47f0c" stroke-width="0.9" stroke-linejoin="round"/></svg>
<svg class="a" style="left:831px;top:587px;" width="10" height="5" viewBox="0 0 10 5"><path d="M0 0 H10 L5 5 Z" fill="#111"/></svg>
<div class="a" style="left:847px;top:580px;width:1px;height:18px;background:#8e8e8e;"></div>
<svg class="a" style="left:856.5px;top:581px;" width="16" height="16" viewBox="0 0 16 16"><circle cx="10.3" cy="6.2" r="4.7" fill="#f2f7fe" stroke="#2e5fa6" stroke-width="1.1"/><path d="M10.1 3.2 V6.4 L11.8 8.4" fill="none" stroke="#2e5fa6" stroke-width="1"/><rect x="0.8" y="5.4" width="7.4" height="9" fill="#f8fbff" stroke="#2e5fa6" stroke-width="1"/><rect x="0.8" y="5.4" width="7.4" height="2.2" fill="#3f6fb8"/><text x="4.5" y="13.6" text-anchor="middle" font-family="Liberation Sans, sans-serif" font-weight="bold" font-size="6.2" fill="#23509a">12</text></svg>
<div class="a" style="left:878px;top:580px;width:1px;height:18px;background:#8e8e8e;"></div>
<svg class="a" style="left:888.5px;top:582.5px;" width="16" height="16" viewBox="0 0 16 16"><rect x="0.9" y="0.8" width="10.2" height="10.2" fill="#dfe9f6" stroke="#a9bcd8" stroke-width="0.9"/><rect x="3.1" y="2.6" width="10.6" height="10.2" fill="#e9f1fb" stroke="#8ea6cc" stroke-width="1"/><path d="M4.9 7.7 H11.7" stroke="#1b62a8" stroke-width="1.4"/></svg>
<svg class="a" style="left:910.5px;top:581.5px;" width="16" height="16" viewBox="0 0 16 16"><rect x="9.2" y="1.4" width="6" height="5.4" fill="#d9f3ff" stroke="#b08a20" stroke-width="0.9"/><rect x="8.7" y="0.9" width="7" height="2.3" fill="#3c5fa5"/><rect x="9.7" y="1.7" width="5" height="0.8" fill="#8fc0f0"/><rect x="1" y="9.4" width="6" height="5.4" fill="#d9f3ff" stroke="#b08a20" stroke-width="0.9"/><rect x="0.5" y="8.9" width="7" height="2.3" fill="#3c5fa5"/><rect x="1.5" y="9.7" width="5" height="0.8" fill="#8fc0f0"/><path d="M2.6 6.6 L2.6 3.6 L6.6 3.6" fill="none" stroke="#3c5fa5" stroke-width="1.1"/><path d="M0.9 5.6 L2.6 7.6 L4.3 5.6 Z M6 1.9 L7.9 3.6 L6 5.3 Z" fill="#3c5fa5"/></svg>
<svg class="a" style="left:496px;top:654px;" width="9" height="9" viewBox="0 0 9 9"><rect x="0.5" y="0.5" width="8" height="8" fill="#e8fbff" stroke="#8a7440" stroke-width="1"/><rect x="0" y="0" width="9" height="3" fill="#43569c"/><rect x="1" y="1" width="7" height="1" fill="#7fa0e8"/><path d="M1 5.5 H8 M3.5 3 V8" stroke="#a08c58" stroke-width="1"/></svg>
<svg class="a" style="left:496px;top:677px;" width="9" height="9" viewBox="0 0 9 9"><rect x="0.5" y="0.5" width="8" height="8" fill="#e8fbff" stroke="#8a7440" stroke-width="1"/><rect x="0" y="0" width="9" height="3" fill="#43569c"/><rect x="1" y="1" width="7" height="1" fill="#7fa0e8"/><path d="M1 5.5 H8 M3.5 3 V8" stroke="#a08c58" stroke-width="1"/></svg>
<svg class="a" style="left:496px;top:700px;" width="9" height="9" viewBox="0 0 9 9"><rect x="0.5" y="0.5" width="8" height="8" fill="#e8fbff" stroke="#8a7440" stroke-width="1"/><rect x="0" y="0" width="9" height="3" fill="#43569c"/><rect x="1" y="1" width="7" height="1" fill="#7fa0e8"/><path d="M1 5.5 H8 M3.5 3 V8" stroke="#a08c58" stroke-width="1"/></svg>
<svg class="a" style="left:496px;top:723px;" width="9" height="9" viewBox="0 0 9 9"><rect x="0.5" y="0.5" width="8" height="8" fill="#e8fbff" stroke="#8a7440" stroke-width="1"/><rect x="0" y="0" width="9" height="3" fill="#43569c"/><rect x="1" y="1" width="7" height="1" fill="#7fa0e8"/><path d="M1 5.5 H8 M3.5 3 V8" stroke="#a08c58" stroke-width="1"/></svg>
</body></html>
